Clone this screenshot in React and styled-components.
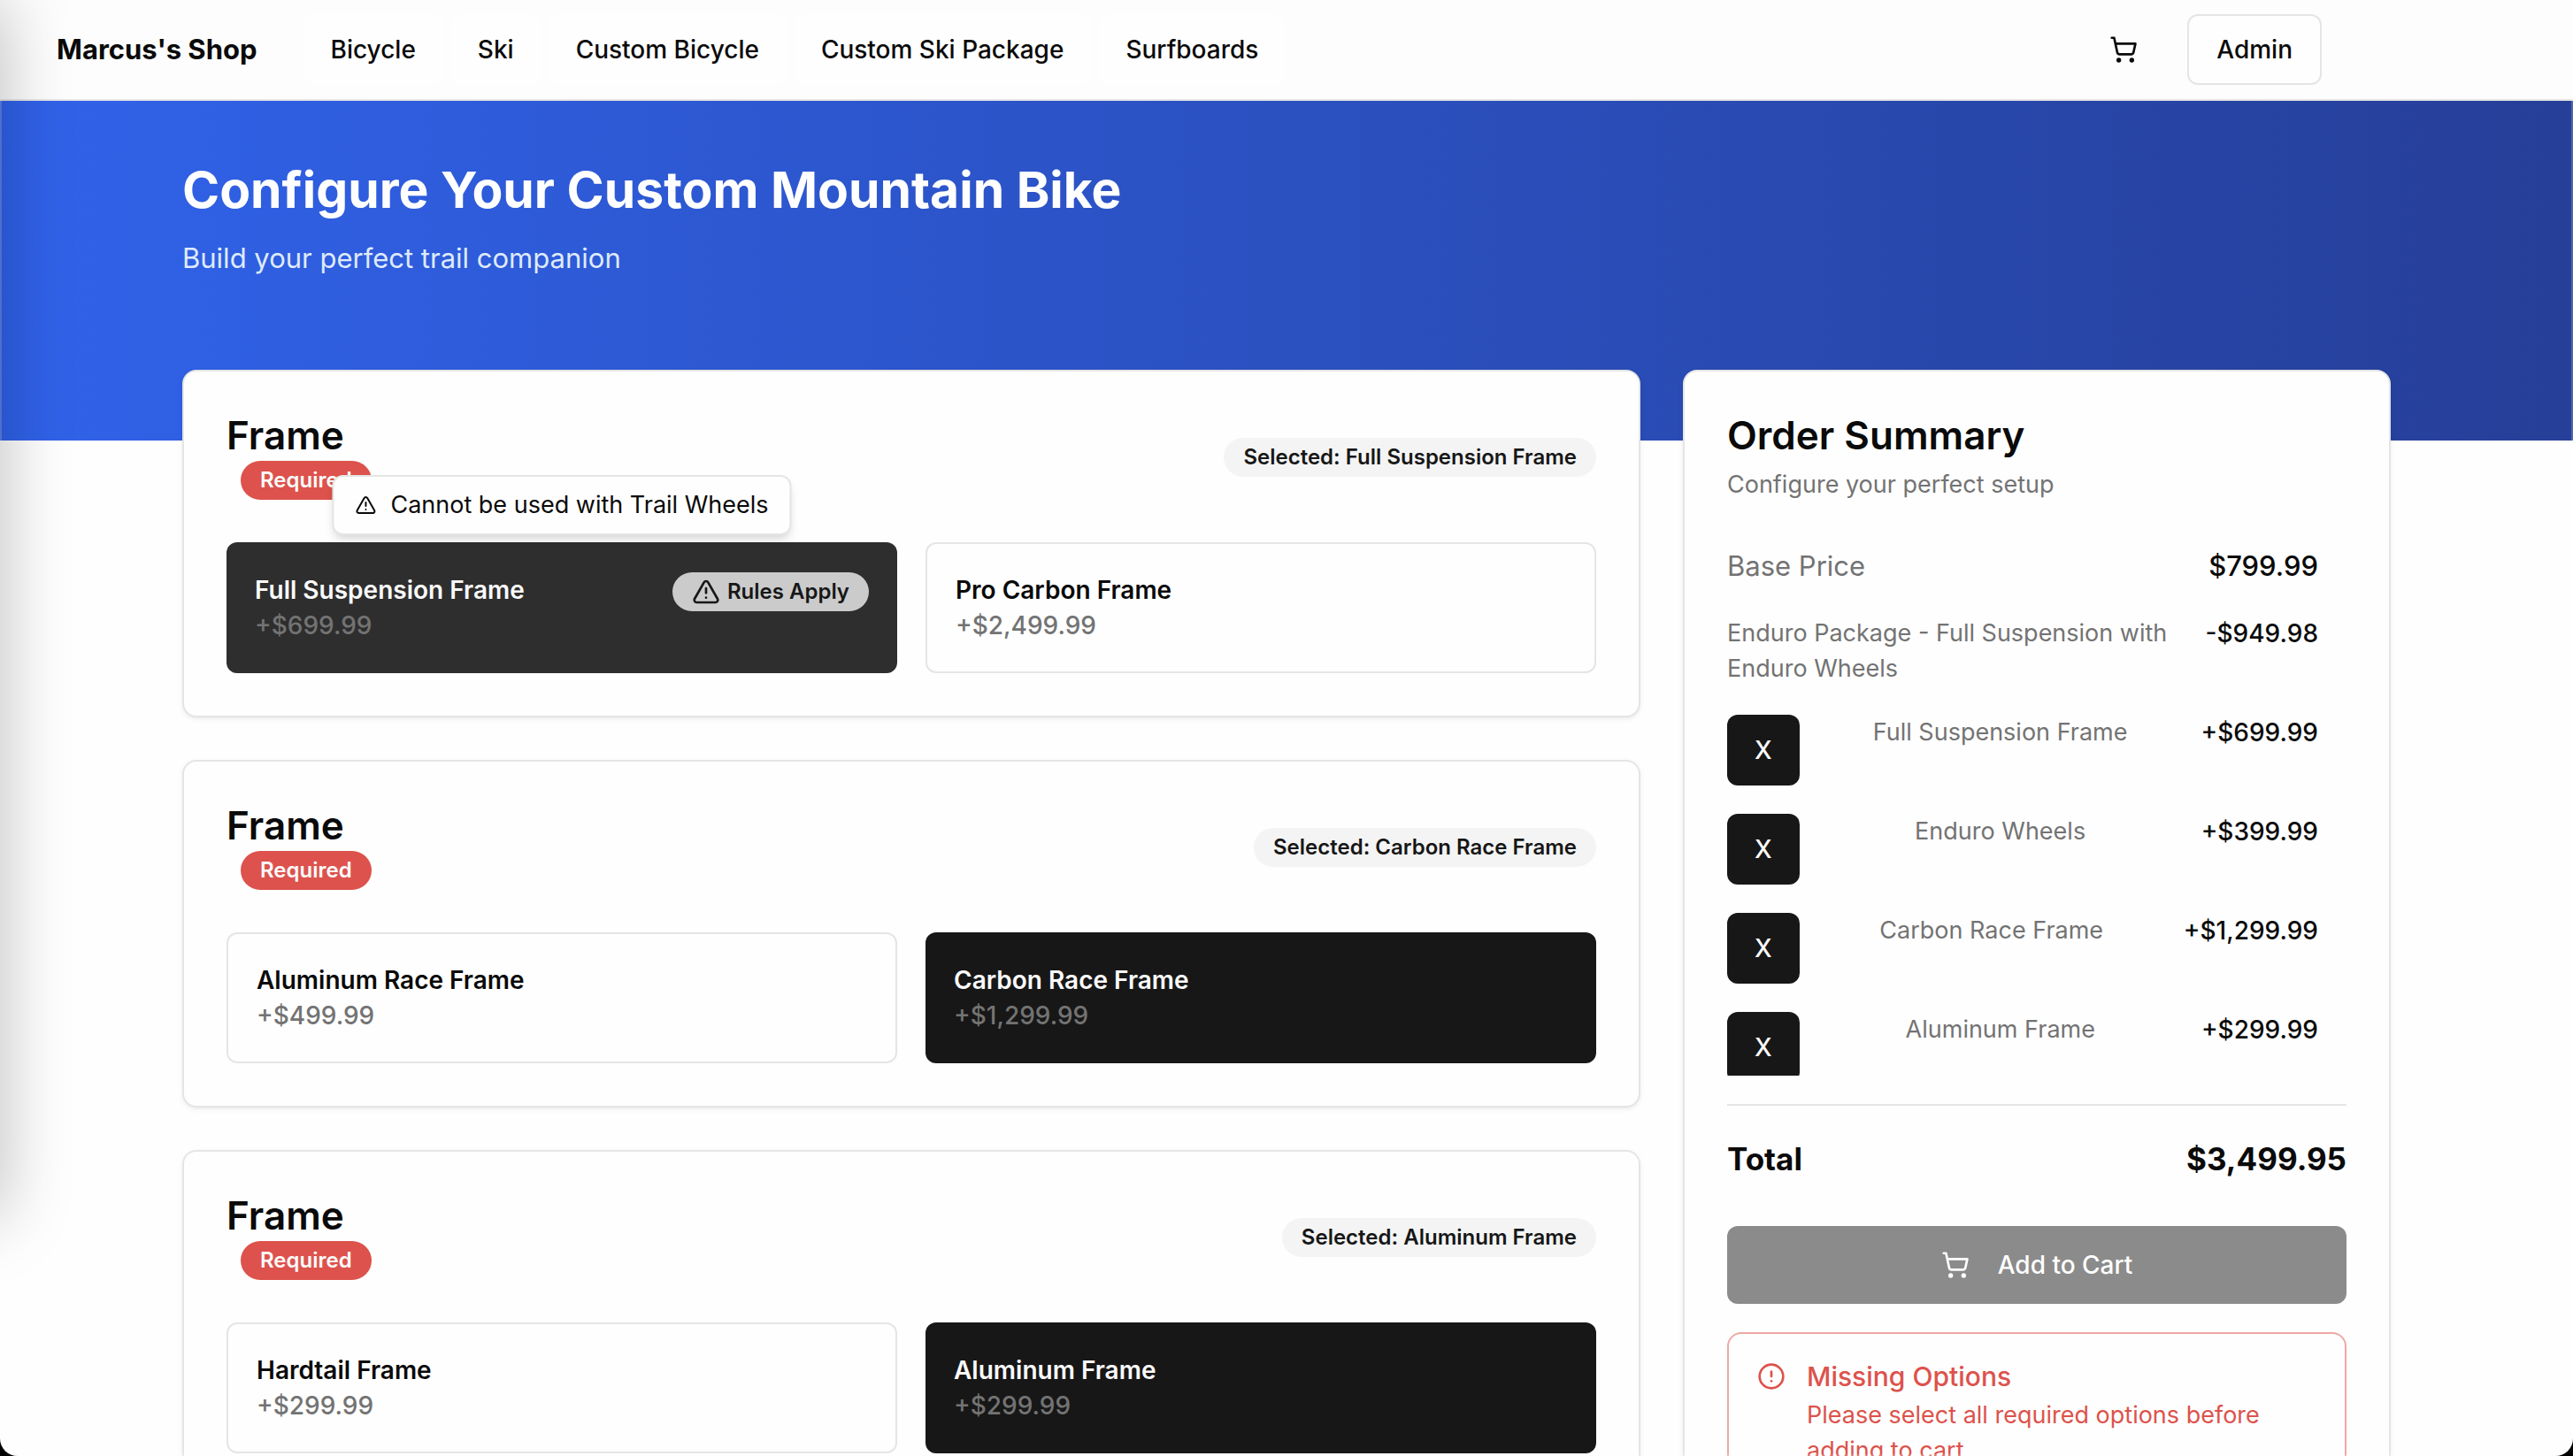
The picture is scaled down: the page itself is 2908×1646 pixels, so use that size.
import React from "react";
import styled, { createGlobalStyle, css } from "styled-components";
import { CircleAlert, ShoppingCart, TriangleAlert } from "lucide-react";

const GlobalStyle = createGlobalStyle`
  *, *::before, *::after { box-sizing: border-box; }
  body {
    margin: 0;
    background: #fefefe;
    color: #0a0a0a;
    font-family: Inter, "Liberation Sans", sans-serif;
    font-size: 28px;
    line-height: 40px;
  }
  h1, h2, p, ul { margin: 0; padding: 0; }
  ul { list-style: none; }
  button { font: inherit; color: inherit; cursor: pointer; }
`;

const Header = styled.header`
  border-bottom: 2px solid #e5e5e5;
  background: #fdfdfd;
`;

const HeaderInner = styled.div`
  display: flex;
  align-items: center;
  max-width: 2624px;
  height: 112px;
  padding-left: 64px;
`;

const Brand = styled.a`
  margin-right: 52px;
  color: #0a0a0a;
  font-size: 31px;
  font-weight: 700;
  text-decoration: none;
`;

const Nav = styled.nav`
  display: flex;
  gap: 8px;
`;

const NavLink = styled.a`
  display: flex;
  align-items: center;
  height: 80px;
  padding: 0 31px;
  border-radius: 12px;
  background: #fefefe;
  color: #0a0a0a;
  font-weight: 500;
  text-decoration: none;
`;

const HeaderActions = styled.div`
  display: flex;
  gap: 32px;
  margin-left: auto;
`;

const IconButton = styled.button`
  display: grid;
  place-items: center;
  width: 80px;
  height: 80px;
  padding: 0;
  border: 0;
  background: transparent;
`;

const OutlineButton = styled.button`
  height: 80px;
  padding: 0 31px;
  border: 2px solid #e5e5e5;
  border-radius: 12px;
  background: #fefefe;
  font-weight: 500;
`;

const Hero = styled.section`
  height: 384px;
  padding-top: 64px;
  background: linear-gradient(to right, #3062e9, #263f98);
  color: #fefefe;
`;

const Container = styled.div`
  max-width: 2560px;
  margin: 0 auto;
  padding: 0 32px;
`;

const HeroTitle = styled.h1`
  margin-bottom: 16px;
  font-size: 57px;
  font-weight: 700;
  line-height: 74px;
`;

const HeroText = styled.p`
  color: #dfeafc;
  font-size: 31px;
  line-height: 48px;
`;

const Columns = styled.div`
  display: grid;
  grid-template-columns: repeat(3, 1fr);
  align-items: start;
  gap: 48px;
  margin-top: -80px;
`;

const GroupList = styled.div`
  display: grid;
  grid-column: span 2;
  gap: 48px;
`;

const Card = styled.section`
  padding: 48px;
  border: 2px solid #e5e5e5;
  border-radius: 16px;
  background: #fefefe;
  box-shadow: 0 2px 6px rgba(0, 0, 0, 0.06), 0 2px 4px -2px rgba(0, 0, 0, 0.06);
`;

const CardTitle = styled.h2`
  font-size: 44px;
  font-weight: 600;
  line-height: 48px;
`;

const GroupHeader = styled.div`
  display: flex;
  align-items: center;
  justify-content: space-between;
  margin-bottom: 48px;
`;

const GroupHeading = styled.div`
  display: grid;
  justify-items: start;
  gap: 5px;
`;

const badgeTones = {
  required: css`
    margin-left: 16px;
    background: #dd524c;
    color: #fafafa;
  `,
  selected: css`
    background: #f4f4f4;
    color: #171717;
  `,
  rules: css`
    background: #cbcbcb;
    color: #171717;
  `,
};

const Badge = styled.span`
  display: inline-flex;
  align-items: center;
  gap: 8px;
  height: 44px;
  padding: 0 22px;
  border-radius: 22px;
  font-size: 24px;
  font-weight: 600;
  line-height: 32px;
  white-space: nowrap;
  ${(p) => badgeTones[p.$tone]}
`;

const OptionGrid = styled.div`
  display: grid;
  grid-template-columns: 1fr 1fr;
  gap: 32px;
`;

const OptionCell = styled.div`
  position: relative;
`;

const OptionButton = styled.button`
  display: flex;
  align-items: flex-start;
  justify-content: space-between;
  width: 100%;
  padding: 32px;
  border: 2px solid #e5e5e5;
  border-radius: 12px;
  background: #fefefe;
  text-align: left;
  ${(p) =>
    p.$selected &&
    css`
      padding: 34px 32px;
      border: 0;
      background: ${p.$hovered ? "#2e2e2e" : "#171717"};
      color: #fafafa;
    `}
`;

const OptionName = styled.span`
  display: block;
  font-weight: 600;
`;

const OptionPrice = styled.span`
  display: block;
  color: #737373;
  font-weight: 500;
`;

const Tooltip = styled.div`
  position: absolute;
  bottom: calc(100% + 8px);
  left: 50%;
  display: flex;
  align-items: center;
  gap: 16px;
  padding: 12px 24px;
  border: 2px solid #e5e5e5;
  border-radius: 12px;
  background: #fefefe;
  box-shadow: 0 8px 12px -2px rgba(0, 0, 0, 0.1), 0 4px 8px -4px rgba(0, 0, 0, 0.1);
  font-size: 27px;
  white-space: nowrap;
  transform: translateX(-50%);
`;

const SummaryText = styled.p`
  margin: 12px 0 48px;
  color: #737373;
  font-size: 27px;
`;

const LineItems = styled.ul`
  display: grid;
  align-content: start;
  gap: 32px;
  height: 600px;
  padding-right: 32px;
  overflow: hidden;
`;

const LineItem = styled.li`
  display: flex;
  align-items: flex-start;
  justify-content: space-between;
`;

const ItemLabel = styled.span`
  color: #737373;
  font-size: ${(p) => (p.$large ? "31px" : "27px")};
  line-height: ${(p) => (p.$large ? "48px" : "40px")};
`;

const ItemPrice = styled.span`
  flex: none;
  font-size: ${(p) => (p.$large ? "31px" : "28px")};
  font-weight: 500;
  line-height: ${(p) => (p.$large ? "48px" : "40px")};
`;

const RemoveButton = styled.button`
  height: 80px;
  padding: 0 31px;
  border: 0;
  border-radius: 12px;
  background: #171717;
  color: #fafafa;
  font-weight: 500;
`;

const TotalRow = styled.div`
  display: flex;
  justify-content: space-between;
  margin: 32px 0 48px;
  padding-top: 32px;
  border-top: 2px solid #e5e5e5;
  font-size: 35px;
  font-weight: 700;
  line-height: 56px;
`;

const AddButton = styled.button`
  display: flex;
  align-items: center;
  justify-content: center;
  gap: 32px;
  width: 100%;
  height: 88px;
  border: 0;
  border-radius: 12px;
  background: #8b8b8b;
  color: #fefefe;
  font-weight: 500;
`;

const Alert = styled.div`
  display: flex;
  gap: 24px;
  margin-top: 32px;
  padding: 32px;
  border: 2px solid #efa8a5;
  border-radius: 16px;
  color: #dd524c;

  svg { flex: none; }
`;

const AlertTitle = styled.p`
  margin-bottom: 8px;
  font-size: 30px;
  font-weight: 500;
  line-height: 32px;
`;

const AlertText = styled.p`
  font-size: 27px;
`;

const WindowFrame = styled.div`
  position: fixed;
  inset: 0;
  z-index: 10;
  border-radius: 0 0 20px 20px;
  box-shadow: 0 0 0 40px #000, inset 0 0 0 2px rgba(255, 255, 255, 0.2);
  pointer-events: none;
  overflow: hidden;

  &::before {
    content: "";
    position: absolute;
    top: 0;
    bottom: 272px;
    left: -80px;
    width: 80px;
    box-shadow: 0 0 80px rgba(0, 0, 0, 0.27);
  }
`;

const navItems = ["Bicycle", "Ski", "Custom Bicycle", "Custom Ski Package", "Surfboards"];

const groups = [
  {
    selected: "Full Suspension Frame",
    options: [
      { name: "Full Suspension Frame", price: "+$699.99", rule: "Cannot be used with Trail Wheels" },
      { name: "Pro Carbon Frame", price: "+$2,499.99" },
    ],
  },
  {
    selected: "Carbon Race Frame",
    options: [
      { name: "Aluminum Race Frame", price: "+$499.99" },
      { name: "Carbon Race Frame", price: "+$1,299.99" },
    ],
  },
  {
    selected: "Aluminum Frame",
    options: [
      { name: "Hardtail Frame", price: "+$299.99" },
      { name: "Aluminum Frame", price: "+$299.99" },
    ],
  },
];

const cartItems = [
  { name: "Full Suspension Frame", price: "+$699.99" },
  { name: "Enduro Wheels", price: "+$399.99" },
  { name: "Carbon Race Frame", price: "+$1,299.99" },
  { name: "Aluminum Frame", price: "+$299.99" },
];

function Option({ option, selected }) {
  return (
    <OptionCell>
      <OptionButton type="button" aria-pressed={selected} $selected={selected} $hovered={Boolean(option.rule)}>
        <span>
          <OptionName>{option.name}</OptionName>
          <OptionPrice>{option.price}</OptionPrice>
        </span>
        {option.rule && (
          <Badge $tone="rules">
            <TriangleAlert size={32} />
            Rules Apply
          </Badge>
        )}
      </OptionButton>
      {option.rule && (
        <Tooltip role="tooltip">
          <TriangleAlert size={24} />
          {option.rule}
        </Tooltip>
      )}
    </OptionCell>
  );
}

function OptionGroup({ group }) {
  return (
    <Card>
      <GroupHeader>
        <GroupHeading>
          <CardTitle>Frame</CardTitle>
          <Badge $tone="required">Required</Badge>
        </GroupHeading>
        <Badge $tone="selected">Selected: {group.selected}</Badge>
      </GroupHeader>
      <OptionGrid>
        {group.options.map((option) => (
          <Option key={option.name} option={option} selected={option.name === group.selected} />
        ))}
      </OptionGrid>
    </Card>
  );
}

function OrderSummary() {
  return (
    <Card>
      <CardTitle>Order Summary</CardTitle>
      <SummaryText>Configure your perfect setup</SummaryText>
      <LineItems>
        <LineItem>
          <ItemLabel $large>Base Price</ItemLabel>
          <ItemPrice $large>$799.99</ItemPrice>
        </LineItem>
        <LineItem>
          <ItemLabel>Enduro Package - Full Suspension with Enduro Wheels</ItemLabel>
          <ItemPrice>-$949.98</ItemPrice>
        </LineItem>
        {cartItems.map((item) => (
          <LineItem key={item.name}>
            <RemoveButton type="button">X</RemoveButton>
            <ItemLabel>{item.name}</ItemLabel>
            <ItemPrice>{item.price}</ItemPrice>
          </LineItem>
        ))}
      </LineItems>
      <TotalRow>
        <span>Total</span>
        <span>$3,499.95</span>
      </TotalRow>
      <AddButton type="button">
        <ShoppingCart size={32} />
        Add to Cart
      </AddButton>
      <Alert role="alert">
        <CircleAlert size={32} />
        <div>
          <AlertTitle>Missing Options</AlertTitle>
          <AlertText>Please select all required options before adding to cart</AlertText>
        </div>
      </Alert>
    </Card>
  );
}

export default function App() {
  return (
    <>
      <GlobalStyle />
      <Header>
        <HeaderInner>
          <Brand href="#">Marcus's Shop</Brand>
          <Nav>
            {navItems.map((item) => (
              <NavLink key={item} href="#">
                {item}
              </NavLink>
            ))}
          </Nav>
          <HeaderActions>
            <IconButton type="button" aria-label="Cart">
              <ShoppingCart size={32} />
            </IconButton>
            <OutlineButton type="button">Admin</OutlineButton>
          </HeaderActions>
        </HeaderInner>
      </Header>
      <Hero>
        <Container>
          <HeroTitle>Configure Your Custom Mountain Bike</HeroTitle>
          <HeroText>Build your perfect trail companion</HeroText>
        </Container>
      </Hero>
      <Container as="main">
        <Columns>
          <GroupList>
            {groups.map((group) => (
              <OptionGroup key={group.selected} group={group} />
            ))}
          </GroupList>
          <OrderSummary />
        </Columns>
      </Container>
      <WindowFrame />
    </>
  );
}
